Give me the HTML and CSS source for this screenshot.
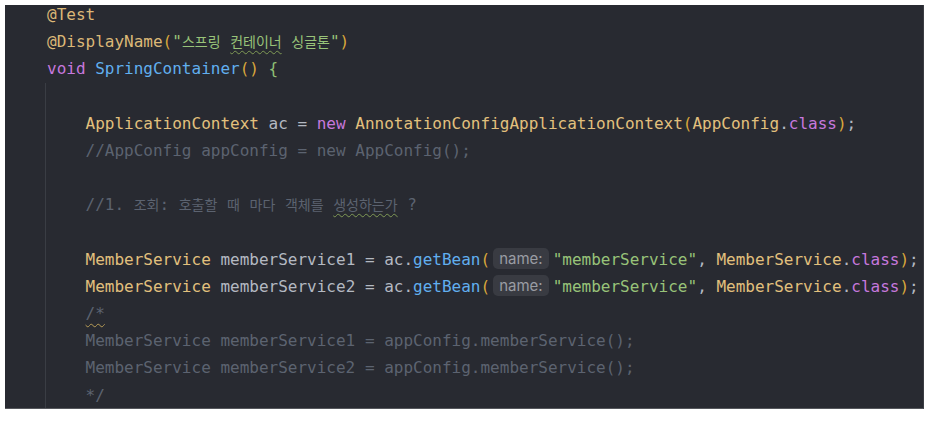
FILE: index.html
```html
<!DOCTYPE html>
<html lang="ko">
<head>
<meta charset="utf-8">
<title>SingletonTest</title>
<link rel="stylesheet" href="styles.css">
</head>
<body>
<div class="editor">
  <div class="code">
    <div class="line"><span class="ann">@Test</span></div>
    <div class="line"><span class="ann">@DisplayName</span><span class="par">(</span><span class="str">"<span class="ko">스프링</span> <span class="ko typo">컨테이너</span> <span class="ko">싱글톤</span>"</span><span class="par">)</span></div>
    <div class="line"><span class="kw">void</span> <span class="fn">SpringContainer</span><span class="par">()</span> <span class="brace">{</span></div>
    <div class="body">
      <div class="line"> </div>
      <div class="line">    <span class="cls">ApplicationContext</span> ac = <span class="kw">new</span> <span class="cls">AnnotationConfigApplicationContext</span><span class="par">(</span><span class="cls">AppConfig</span>.<span class="kw">class</span><span class="par">)</span>;</div>
      <div class="line">    <span class="cm">//AppConfig appConfig = new AppConfig();</span></div>
      <div class="line"> </div>
      <div class="line">    <span class="cm">//1. <span class="ko">조회</span>: <span class="ko">호출할</span> <span class="ko">때</span> <span class="ko">마다</span> <span class="ko">객체를</span> <span class="ko typo">생성하는가</span> ?</span></div>
      <div class="line"> </div>
      <div class="line">    <span class="cls">MemberService</span> memberService1 = ac.<span class="fn">getBean</span><span class="par">(</span><span class="hint">name:</span><span class="str">"memberService"</span>, <span class="cls">MemberService</span>.<span class="kw">class</span><span class="par">)</span>;</div>
      <div class="line">    <span class="cls">MemberService</span> memberService2 = ac.<span class="fn">getBean</span><span class="par">(</span><span class="hint">name:</span><span class="str">"memberService"</span>, <span class="cls">MemberService</span>.<span class="kw">class</span><span class="par">)</span>;</div>
      <div class="line">    <span class="cm"><span class="warn">/*</span></span></div>
      <div class="line">    <span class="cm">MemberService memberService1 = appConfig.memberService();</span></div>
      <div class="line">    <span class="cm">MemberService memberService2 = appConfig.memberService();</span></div>
      <div class="line">    <span class="cm">*/</span></div>
    </div>
  </div>
</div>
</body>
</html>
```
FILE: styles.css
```css
html, body {
  margin: 0;
  padding: 0;
  background: #ffffff;
}

.editor {
  margin: 5px 0 0 5px;
  width: 919px;
  height: 404px;
  background: #282a31;
  overflow: hidden;
  border-right: 1px solid #3a3c42;
  border-bottom: 1px solid #55575c;
  box-sizing: border-box;
}

.code {
  margin-top: -4px;
  padding-left: 42px;
  font-family: "DejaVu Sans Mono", "Liberation Mono", monospace;
  font-size: 16px;
  line-height: 27.2px;
  color: #b4b9c2;
}

.line {
  white-space: pre;
  height: 27.2px;
}

.body {
  margin-left: -2px;
  padding-left: 1px;
  border-left: 1px solid #3a3d44;
  padding-bottom: 20px;
}

.ann { color: #dcb877; }
.cls { color: #e2c07d; }
.kw { color: #c678dd; }
.fn { color: #61afef; }
.str { color: #98c379; }
.par { color: #d8a73c; }
.brace { color: #8fbf74; }
.cm { color: #5c6370; }

.ko {
  font-family: "Noto Sans CJK KR", sans-serif;
  font-size: 14px;
}

.typo {
  text-decoration: underline wavy #7f9a55;
  text-decoration-thickness: 1px;
  text-underline-offset: 3px;
}

.warn {
  text-decoration: underline wavy #b79c55;
  text-decoration-thickness: 1px;
  text-underline-offset: 4px;
}

.hint {
  display: inline-block;
  font-family: "Inter", "Liberation Sans", sans-serif;
  font-size: 15px;
  line-height: 21px;
  color: #9a9da4;
  background: #393b42;
  border-radius: 5px;
  padding: 0 6px;
  margin: 0 4px 0 3px;
  vertical-align: 1px;
}
```
